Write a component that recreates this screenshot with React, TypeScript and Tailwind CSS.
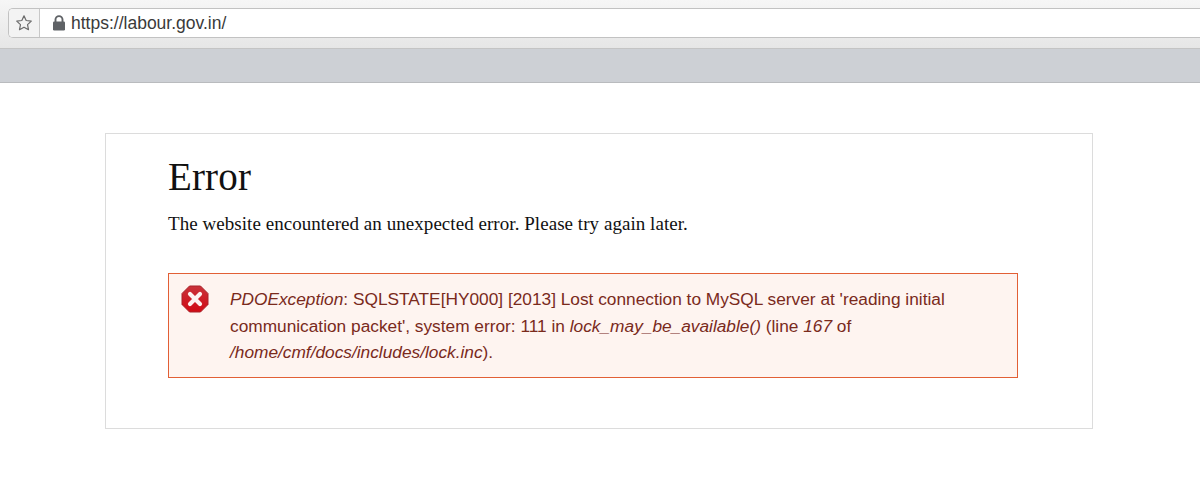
import React from "react";

export default function App() {
  return (
    <div className="w-[1200px] h-[501px] overflow-hidden bg-white flex flex-col">
      <div className="h-[49px] shrink-0 bg-gradient-to-b from-[#f6f6f6] to-[#e6e6e6] border-b border-[#c4c4c4] pt-[8px] pl-[8px]">
        <div className="h-[30px] flex rounded-l-[5px] border border-r-0 border-[#c2c2c2] bg-white overflow-hidden">
          <div className="w-[31px] shrink-0 bg-[#f3f3f3] border-r border-[#c8c8c8] flex items-center justify-center">
            <svg width="18" height="18" viewBox="0 0 24 24" fill="none" stroke="#6c6c6c" strokeWidth="1.6" strokeLinejoin="round">
              <path d="M12 2.5l2.9 6.2 6.8.8-5 4.7 1.3 6.7L12 17.6l-6 3.3 1.3-6.7-5-4.7 6.800-.8z" />
            </svg>
          </div>
          <div className="flex items-center pl-[12px]">
            <svg width="14" height="16" viewBox="0 0 14 16" className="mr-[5px]">
              <path d="M3.5 7V4.6a3.5 3.5 0 0 1 7 0V7" fill="none" stroke="#5f6266" strokeWidth="1.9" />
              <rect x="1" y="6.5" width="12" height="9" rx="1.2" fill="#5f6266" />
            </svg>
            <span className="font-['Liberation_Sans',sans-serif] text-[17.5px] text-[#3a3a3a]">https://labour.gov.in/</span>
          </div>
        </div>
      </div>
      <div className="h-[34px] shrink-0 bg-[#cdd0d5] border-b border-[#b9bbbe]" />
      <div className="ml-[105px] mt-[50px] w-[988px] h-[296px] border border-[#dcdcdc] pl-[62px] pr-[74px] pt-[21px]">
        <h1 className="font-['Liberation_Serif',serif] text-[39px] leading-[44px] text-[#111111] tracking-[0.15px]">Error</h1>
        <p className="mt-[13px] font-['Liberation_Serif',serif] text-[19px] leading-[24px] text-[#111111] tracking-[0.05px]">
          The website encountered an unexpected error. Please try again later.
        </p>
        <div className="mt-[37px] h-[105px] border border-[#e25f35] bg-[#fef4f0] flex pl-[12px] pt-[11px]">
          <svg width="28" height="28" viewBox="0 0 28 28" className="shrink-0">
            <defs>
              <linearGradient id="stop" x1="0" y1="0" x2="0" y2="1">
                <stop offset="0" stopColor="#c9323a" />
                <stop offset="1" stopColor="#d10a14" />
              </linearGradient>
            </defs>
            <path d="M8.5 1h11L27 8.500v11L19.500 27h-11L1 19.500v-11z" fill="url(#stop)" stroke="#a8232a" strokeWidth="1" strokeLinejoin="round" />
            <path d="M9 9l10 10M19 9L9 19" stroke="#fdf3f1" strokeWidth="4.2" strokeLinecap="round" />
          </svg>
          <div className="ml-[21px] mt-[1px] font-['Liberation_Sans',sans-serif] text-[17.3px] leading-[26.5px] text-[#7a2a1c]">
            <em>PDOException</em>: SQLSTATE[HY000] [2013] Lost connection to MySQL server at 'reading initial
            <br />
            communication packet', system error: 111 in <em>lock_may_be_available()</em> (line <em>167</em> of
            <br />
            <em>/home/cmf/docs/includes/lock.inc</em>).
          </div>
        </div>
      </div>
    </div>
  );
}
